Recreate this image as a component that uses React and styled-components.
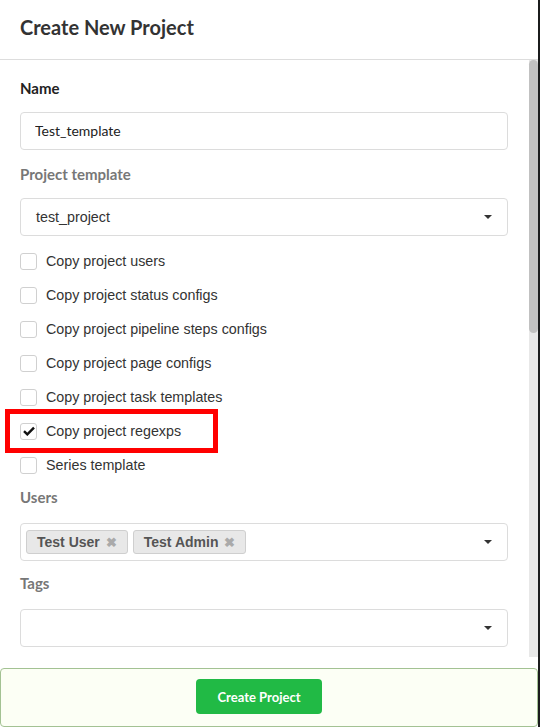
import React, { useState } from 'react'
import styled, { createGlobalStyle } from 'styled-components'

const Global = createGlobalStyle`
  html, body { margin: 0; padding: 0; }
  body {
    background: #1b1c1d;
    font-family: "Liberation Sans", Arial, sans-serif;
  }
`

const Modal = styled.div`
  width: 538px;
  height: 727px;
  background: #fff;
  display: flex;
  flex-direction: column;
  overflow: hidden;
`

const Header = styled.div`
  height: 59px;
  flex-shrink: 0;
  border-bottom: 1px solid #ddd;
  display: flex;
  align-items: center;
  padding: 0 20px;
  h2 {
    margin: 0;
    font-family: Lato, sans-serif;
    font-weight: 700;
    font-size: 20px;
    color: #333;
    margin-top: -6px;
  }
`

const Body = styled.div`
  height: 597px;
  flex-shrink: 0;
  display: flex;
  overflow: hidden;
`

const Content = styled.div`
  flex: 1;
  padding: 18px 21px 0 20px;
`

const ScrollTrack = styled.div`
  width: 9px;
  background: #e8e8e8;
`

const ScrollThumb = styled.div`
  height: 273px;
  background: #c1c1c1;
  border-radius: 5px;
`

const Field = styled.div`
  margin-bottom: ${p => p.$gap || 14}px;
`

const Label = styled.div`
  font-family: Lato, sans-serif;
  font-weight: 700;
  font-size: 15px;
  line-height: 20px;
  color: ${p => (p.$muted ? '#777' : '#222')};
  margin-bottom: ${p => p.$gap || 14}px;
`

const Input = styled.input`
  display: block;
  width: 100%;
  height: 38px;
  box-sizing: border-box;
  border: 1px solid #dcdcdc;
  border-radius: 4px;
  padding: 0 14px 2px;
  font-family: Lato, sans-serif;
  font-size: 14px;
  color: #222;
  outline: none;
`

const Select = styled.div`
  display: flex;
  align-items: center;
  height: 38px;
  box-sizing: border-box;
  border: 1px solid #dcdcdc;
  border-radius: 4px;
  padding: ${p => (p.$multi ? '0 0 0 5px' : '0 0 0 15px')};
  font-size: 14.3px;
  color: #333;
`

const SelectValue = styled.div`
  flex: 1;
  display: flex;
  gap: 5px;
  align-items: center;
`

const Caret = styled.span`
  width: 0;
  height: 0;
  border-left: 4px solid transparent;
  border-right: 4px solid transparent;
  border-top: 4px solid #333;
  margin: 0 15px 0 10px;
`

const Chip = styled.span`
  display: inline-flex;
  align-items: center;
  height: 24px;
  box-sizing: border-box;
  padding: 0 10px;
  background: #e8e8e8;
  border: 1px solid #cfcfcf;
  border-radius: 3px;
  font-weight: 700;
  font-size: 14px;
  color: #555;
  gap: 6px;
  span { color: #aaa; font-size: 13px; }
`

const Checks = styled.div`
  display: flex;
  flex-direction: column;
  gap: 14px;
  margin: 15px 0 12px;
`

const CheckRow = styled.label`
  display: flex;
  align-items: center;
  height: 20px;
  font-size: 14.3px;
  color: #333;
  gap: 9px;
`

const Box = styled.span`
  width: 17px;
  height: 17px;
  box-sizing: border-box;
  border: 1px solid #d0d0d0;
  border-radius: 3px;
  background: #fff;
  display: flex;
  align-items: center;
  justify-content: center;
`

const Wrap = styled.div`
  position: relative;
`

const Highlight = styled.div`
  position: absolute;
  left: -15px;
  top: -12px;
  width: 213px;
  height: 44px;
  box-sizing: border-box;
  border: 5px solid #ff0000;
  pointer-events: none;
`

const Footer = styled.div`
  margin-top: 11px;
  flex: 1;
  background: #fcfff5;
  border: 1px solid #a3c293;
  border-radius: 4px;
  display: flex;
  justify-content: center;
  padding: 10px 20px 0 0;
`

const Button = styled.button`
  width: 126px;
  height: 35px;
  border: none;
  border-radius: 4px;
  background: #21ba45;
  color: #fff;
  font-family: Lato, sans-serif;
  font-weight: 700;
  font-size: 13px;
  cursor: pointer;
`

const Check = ({ label, checked, highlight }) => (
  <Wrap>
    {highlight && <Highlight />}
    <CheckRow>
      <Box>
        {checked && (
          <svg width="12" height="10" viewBox="0 0 12 10">
            <path d="M1 5.2 L4.3 8.4 L11 1.6" fill="none" stroke="#111" strokeWidth="2.4" />
          </svg>
        )}
      </Box>
      {label}
    </CheckRow>
  </Wrap>
)

const options = [
  'Copy project users',
  'Copy project status configs',
  'Copy project pipeline steps configs',
  'Copy project page configs',
  'Copy project task templates',
  'Copy project regexps',
  'Series template',
]

export default function App() {
  const [name, setName] = useState('Test_template')
  return (
    <>
      <Global />
      <Modal>
        <Header><h2>Create New Project</h2></Header>
        <Body>
          <Content>
            <Field>
              <Label>Name</Label>
              <Input value={name} onChange={e => setName(e.target.value)} />
            </Field>
            <Label $muted>Project template</Label>
            <Select>
              <SelectValue>test_project</SelectValue>
              <Caret />
            </Select>
            <Checks>
              {options.map((o, i) => (
                <Check key={o} label={o} checked={i === 5} highlight={i === 5} />
              ))}
            </Checks>
            <Field $gap={12}>
              <Label $muted $gap={16}>Users</Label>
              <Select $multi>
                <SelectValue>
                  <Chip>Test User<span>✖</span></Chip>
                  <Chip>Test Admin<span>✖</span></Chip>
                </SelectValue>
                <Caret />
              </Select>
            </Field>
            <Field>
              <Label $muted $gap={16}>Tags</Label>
              <Select>
                <SelectValue />
                <Caret />
              </Select>
            </Field>
          </Content>
          <ScrollTrack><ScrollThumb /></ScrollTrack>
        </Body>
        <Footer>
          <Button>Create Project</Button>
        </Footer>
      </Modal>
    </>
  )
}
